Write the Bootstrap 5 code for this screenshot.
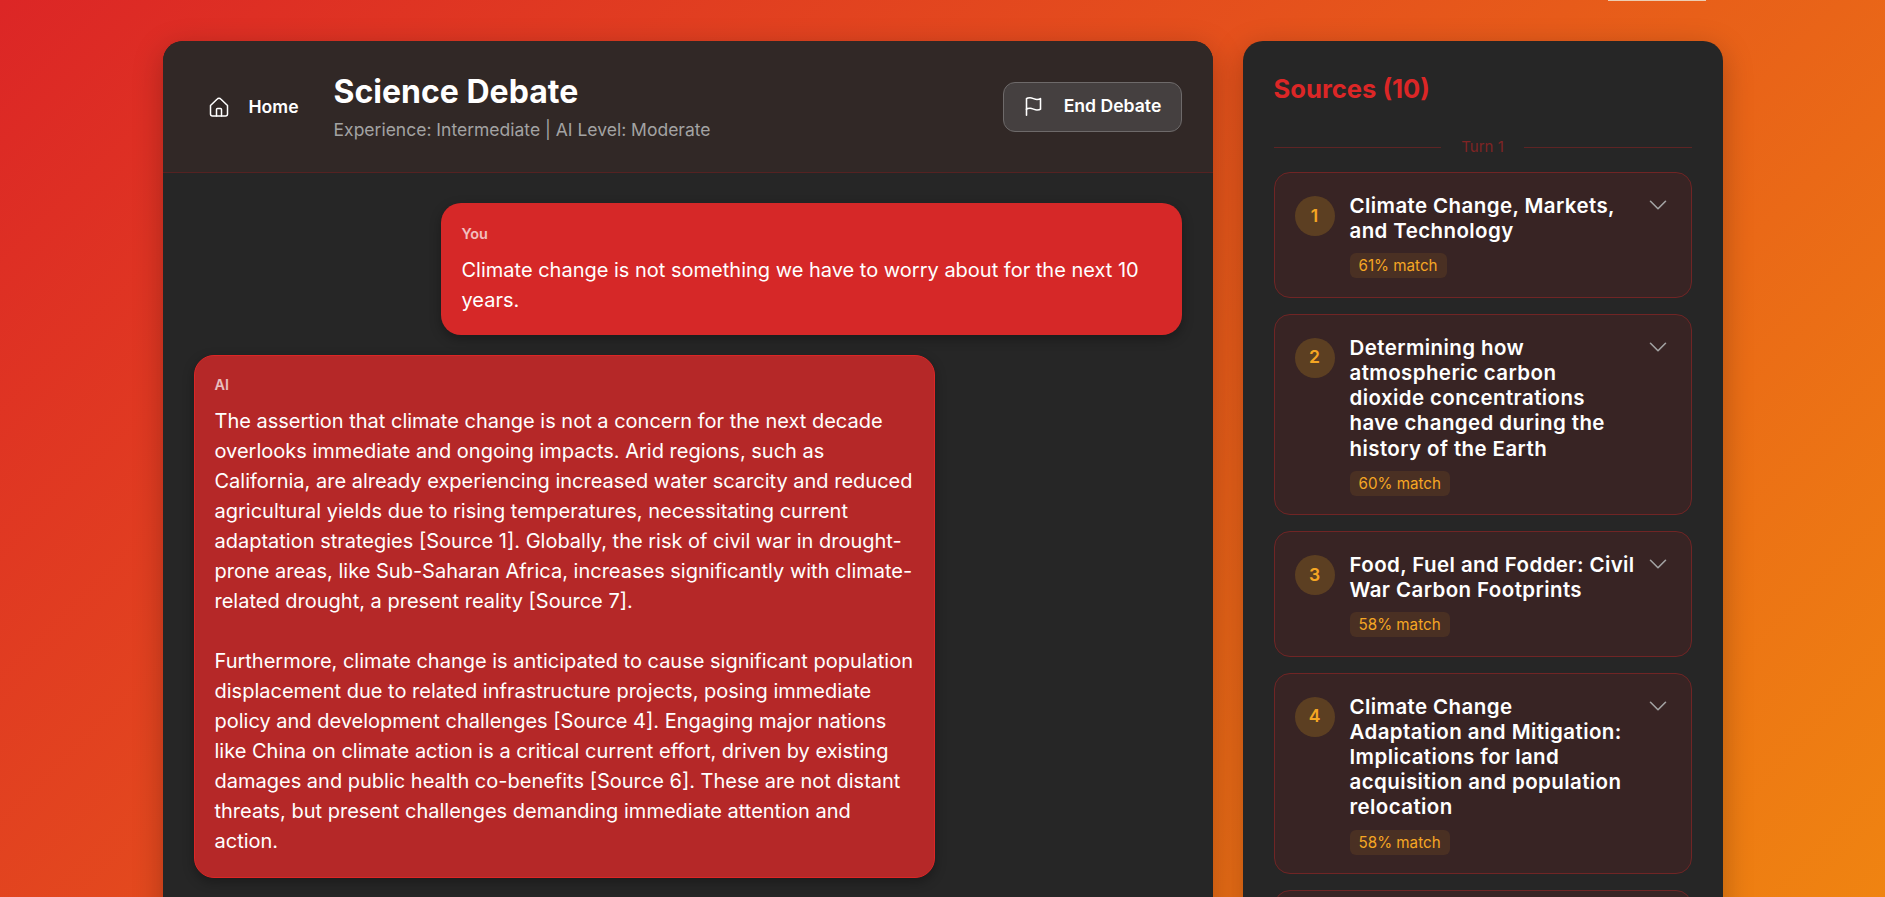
<!DOCTYPE html>
<html lang="en">
<head>
    <meta charset="UTF-8">
    <meta name="viewport" content="width=device-width, initial-scale=1.0">
    <title>Science Debate</title>
    <link href="https://cdn.jsdelivr.net/npm/bootstrap@5.3.3/dist/css/bootstrap.min.css" rel="stylesheet">
    <style>
        html, body {
            height: 100%;
            overflow: hidden;
        }
        body {
            font-family: "Inter", "Liberation Sans", sans-serif;
            background: linear-gradient(135deg, #dc2626 0%, #f59e0b 100%) no-repeat;
            background-size: 100% 1681px;
            color: #fff;
        }
        .top-sliver {
            height: 1px;
            width: 98px;
            margin-left: 1608px;
            background: #eccdb2;
        }
        .debate-layout {
            width: 1560px;
            height: 896px;
            margin: 40px auto 0;
            gap: 30px;
        }
        .panel-main, .panel-sources {
            background: #262626;
            border-radius: 20px 20px 0 0;
            overflow: hidden;
            box-shadow: 0 8px 30px rgba(0, 0, 0, .25);
        }
        .panel-main { width: 1050px; }
        .panel-sources { width: 480px; padding: 33px 31px 0; }
        .debate-head {
            height: 132px;
            padding: 2px 31px 0 44px;
            background: #312826;
            border-bottom: 1px solid #552222;
        }
        .home-link {
            color: #fff;
            font-size: 17.6px;
            font-weight: 600;
            gap: 18px;
            margin-right: 35px;
        }
        .debate-title {
            font-size: 32px;
            font-weight: 700;
            line-height: 38px;
            margin: 0 0 6px;
        }
        .debate-sub { color: #a3a3a3; font-size: 17.5px; line-height: 26px; }
        .end-btn {
            width: 179px;
            height: 50px;
            margin-top: -2px;
            gap: 20px;
            color: #fff;
            font-size: 17.6px;
            font-weight: 600;
            background: #454040;
            border: 1px solid #6e6a6a;
            border-radius: 12px;
        }
        .end-btn:hover { background: #454040; color: #fff; border-color: #6e6a6a; }
        .msg-list { padding: 30px 31px 0; gap: 20px; }
        .bubble {
            width: 741px;
            padding: 22px 20px 20px 21px;
            border-radius: 20px;
            box-shadow: 0 4px 12px rgba(0, 0, 0, .3);
        }
        .bubble-you { background: #d62828; align-self: flex-end; }
        .bubble-ai { background: #b52828; border: 1px solid #dc2626; padding: 20px 19px 21px 20px; }
        .bubble-label {
            font-size: 14.4px;
            font-weight: 600;
            line-height: 17px;
            margin-bottom: 13px;
            opacity: .7;
        }
        .bubble-text {
            font-size: 20px;
            line-height: 30px;
            white-space: pre-wrap;
        }
        .sources-title {
            color: #dc2626;
            font-size: 25.6px;
            font-weight: 700;
            line-height: 30px;
            margin: 0 0 34px;
        }
        .turn-split {
            gap: 20px;
            color: #7f2424;
            font-size: 15px;
            line-height: 18px;
            margin-bottom: 16px;
        }
        .turn-split::before, .turn-split::after {
            content: "";
            flex: 1;
            height: 1px;
            background: #5e2424;
        }
        .src-list { gap: 15.7px; }
        .src-card {
            background: #382424;
            border: 1px solid #702525;
            border-radius: 16px;
            padding: 20px 20px 18.6px;
            gap: 15px;
        }
        .src-num {
            width: 40px;
            height: 40px;
            flex: none;
            margin-top: 3px;
            border-radius: 50%;
            background: #5c3f22;
            color: #f5a623;
            font-weight: 600;
            font-size: 17.6px;
        }
        .src-body { flex: 1; min-width: 0; }
        .src-title {
            font-size: 20.5px;
            font-weight: 600;
            letter-spacing: .4px;
            line-height: 25.2px;
            margin: 0 0 10px;
        }
        .src-match {
            display: block;
            width: fit-content;
            padding: 0 9px;
            line-height: 25px;
            font-size: 15.2px;
            color: #f5a623;
            background: #4a3023;
            border-radius: 6px;
        }
        .src-chevron { flex: none; margin: 0 1px 0 -7px; }
        .src-card-cut { height: 60px; }
    </style>
</head>
<body>
    <div class="top-sliver"></div>
    <div class="debate-layout d-flex">
        <div class="panel-main d-flex flex-column">
            <div class="debate-head d-flex align-items-center justify-content-between">
                <div class="d-flex align-items-center">
                    <a class="home-link d-flex align-items-center text-decoration-none" href="#">
                        <svg width="24" height="24" viewBox="0 0 24 24" fill="none" stroke="currentColor" stroke-width="1.5" stroke-linecap="round" stroke-linejoin="round"><path d="M3.5 10.5 10 4.2a2.8 2.8 0 0 1 4 0l6.5 6.3V19a2 2 0 0 1-2 2h-13a2 2 0 0 1-2-2z"/><path d="M9.5 21v-6.5a1 1 0 0 1 1-1h3a1 1 0 0 1 1 1V21"/></svg>
                        Home
                    </a>
                    <div>
                        <h1 class="debate-title">Science Debate</h1>
                        <div class="debate-sub">Experience: Intermediate | AI Level: Moderate</div>
                    </div>
                </div>
                <button class="btn end-btn d-flex align-items-center justify-content-center">
                    <svg width="21" height="21" viewBox="0 0 24 24" fill="none" stroke="currentColor" stroke-width="1.8" stroke-linecap="round" stroke-linejoin="round"><path d="M4 15s1-1 4-1 5 2 8 2 4-1 4-1V3s-1 1-4 1-5-2-8-2-4 1-4 1z"/><path d="M4 22v-7"/></svg>
                    End Debate
                </button>
            </div>
            <div class="msg-list d-flex flex-column">
                <div class="bubble bubble-you">
                    <div class="bubble-label">You</div>
                    <div class="bubble-text">Climate change is not something we have to worry about for the next 10 years.</div>
                </div>
                <div class="bubble bubble-ai">
                    <div class="bubble-label">AI</div>
                    <div class="bubble-text">The assertion that climate change is not a concern for the next decade overlooks immediate and ongoing impacts. Arid regions, such as California, are already experiencing increased water scarcity and reduced agricultural yields due to rising temperatures, necessitating current adaptation strategies [Source 1]. Globally, the risk of civil war in drought-prone areas, like Sub-Saharan Africa, increases significantly with climate-related drought, a present reality [Source 7].

Furthermore, climate change is anticipated to cause significant population displacement due to related infrastructure projects, posing immediate policy and development challenges [Source 4]. Engaging major nations like China on climate action is a critical current effort, driven by existing damages and public health co-benefits [Source 6]. These are not distant threats, but present challenges demanding immediate attention and action.</div>
                </div>
            </div>
        </div>
        <div class="panel-sources">
            <h2 class="sources-title">Sources (10)</h2>
            <div class="turn-split d-flex align-items-center">Turn 1</div>
            <div class="src-list d-flex flex-column">
                <div class="src-card d-flex">
                    <div class="src-num d-flex align-items-center justify-content-center">1</div>
                    <div class="src-body">
                        <div class="src-title">Climate Change, Markets, and Technology</div>
                        <span class="src-match">61% match</span>
                    </div>
                    <svg class="src-chevron" width="24" height="24" viewBox="0 0 24 24" fill="none" stroke="#a3a3a3" stroke-width="1.6" stroke-linecap="round" stroke-linejoin="round"><path d="m19.5 8.25-7.5 7.5-7.5-7.5"/></svg>
                </div>
                <div class="src-card d-flex">
                    <div class="src-num d-flex align-items-center justify-content-center">2</div>
                    <div class="src-body">
                        <div class="src-title">Determining how<br>atmospheric carbon<br>dioxide concentrations<br>have changed during the<br>history of the Earth</div>
                        <span class="src-match">60% match</span>
                    </div>
                    <svg class="src-chevron" width="24" height="24" viewBox="0 0 24 24" fill="none" stroke="#a3a3a3" stroke-width="1.6" stroke-linecap="round" stroke-linejoin="round"><path d="m19.5 8.25-7.5 7.5-7.5-7.5"/></svg>
                </div>
                <div class="src-card d-flex">
                    <div class="src-num d-flex align-items-center justify-content-center">3</div>
                    <div class="src-body">
                        <div class="src-title">Food, Fuel and Fodder: Civil War Carbon Footprints</div>
                        <span class="src-match">58% match</span>
                    </div>
                    <svg class="src-chevron" width="24" height="24" viewBox="0 0 24 24" fill="none" stroke="#a3a3a3" stroke-width="1.6" stroke-linecap="round" stroke-linejoin="round"><path d="m19.5 8.25-7.5 7.5-7.5-7.5"/></svg>
                </div>
                <div class="src-card d-flex">
                    <div class="src-num d-flex align-items-center justify-content-center">4</div>
                    <div class="src-body">
                        <div class="src-title">Climate Change<br>Adaptation and Mitigation:<br>Implications for land<br>acquisition and population<br>relocation</div>
                        <span class="src-match">58% match</span>
                    </div>
                    <svg class="src-chevron" width="24" height="24" viewBox="0 0 24 24" fill="none" stroke="#a3a3a3" stroke-width="1.6" stroke-linecap="round" stroke-linejoin="round"><path d="m19.5 8.25-7.5 7.5-7.5-7.5"/></svg>
                </div>
                <div class="src-card src-card-cut"></div>
            </div>
        </div>
    </div>
    <script src="https://cdn.jsdelivr.net/npm/bootstrap@5.3.3/dist/js/bootstrap.bundle.min.js"></script>
</body>
</html>
